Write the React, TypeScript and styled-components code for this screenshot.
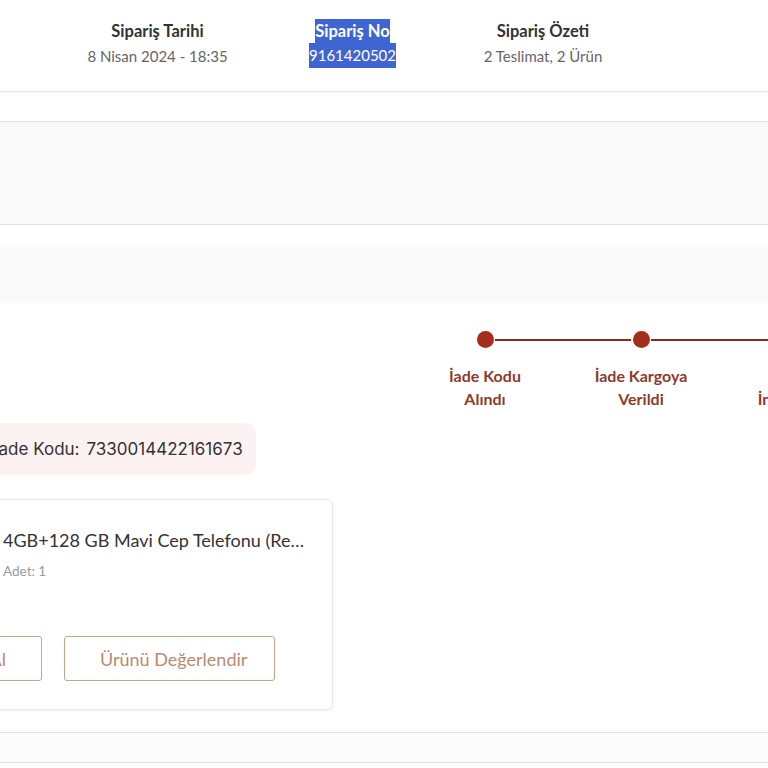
import React from "react";
import styled, { createGlobalStyle } from "styled-components";

const Global = createGlobalStyle`
  html, body { margin: 0; padding: 0; background: #fff; }
  body { overflow: hidden; font-family: "Lato", "Noto Sans", sans-serif; color: #333; }
  * { box-sizing: border-box; }
`;

const Page = styled.div`
  width: 768px;
  height: 768px;
  overflow: hidden;
  display: flex;
  flex-direction: column;
`;

const Header = styled.header`
  height: 92px;
  display: grid;
  grid-template-columns: 195px 195px 186px;
  padding: 19px 0 0 60px;
  border-bottom: 1px solid #e3e3e3;
  box-shadow: 0 1px 2px rgba(0, 0, 0, 0.04);
`;

const Col = styled.div<{ $tight?: boolean }>`
  display: flex;
  flex-direction: column;
  align-items: center;
  gap: ${(p) => (p.$tight ? "0" : "1px")};
`;

const ColTitle = styled.span<{ $sel?: boolean }>`
  font-size: 16.5px;
  font-weight: 700;
  line-height: 24px;
  color: ${(p) => (p.$sel ? "#fff" : "#333")};
  background: ${(p) => (p.$sel ? "#3f65d2" : "transparent")};
`;

const ColValue = styled.span<{ $sel?: boolean }>`
  font-size: 15px;
  line-height: 25px;
  color: ${(p) => (p.$sel ? "#fff" : "#666")};
  background: ${(p) => (p.$sel ? "#3f65d2" : "transparent")};
`;

const GraySection = styled.section`
  margin-top: 29px;
  height: 104px;
  background: #f9f9f9;
  border-top: 1px solid #e3e3e3;
  border-bottom: 1px solid #e3e3e3;
`;

const Band = styled.div`
  margin-top: 22px;
  height: 56px;
  background: #fafafa;
`;

const Timeline = styled.div`
  display: flex;
  padding-left: 407px;
  margin-top: 28px;
`;

const Step = styled.div<{ $last?: boolean }>`
  position: relative;
  flex: 0 0 156px;
  display: flex;
  flex-direction: column;
  align-items: center;
  &::after {
    content: "";
    display: ${(p) => (p.$last ? "none" : "block")};
    position: absolute;
    top: 8px;
    left: calc(50% + 10px);
    width: 136px;
    height: 2px;
    background: #8a2a1d;
  }
`;

const Dot = styled.span`
  width: 17px;
  height: 17px;
  border-radius: 50%;
  background: #a52d1c;
`;

const StepLabel = styled.span`
  margin-top: 16px;
  font-size: 16px;
  font-weight: 700;
  line-height: 23px;
  color: #8d3b2c;
  text-align: center;
`;

const CodePill = styled.div`
  align-self: flex-start;
  margin: 13px 0 0 -21px;
  height: 52px;
  padding: 0 13px 0 15px;
  display: flex;
  align-items: center;
  gap: 7px;
  background: #fcf2f1;
  border-radius: 10px;
  font-family: "Inter", "Roboto", sans-serif;
  font-size: 17px;
  color: #333;
`;

const Card = styled.div`
  align-self: flex-start;
  margin: 24px 0 0 -162px;
  width: 495px;
  height: 211px;
  border: 1px solid #e6e6e6;
  border-radius: 6px;
  box-shadow: 0 1px 3px rgba(0, 0, 0, 0.05);
  padding: 28px 24px 28px 24px;
  display: flex;
  flex-direction: column;
`;

const TopRow = styled.div`
  display: flex;
  gap: 16px;
`;

const Thumb = styled.div`
  flex: 0 0 124px;
  height: 60px;
`;

const Info = styled.div`
  flex: 1;
  min-width: 0;
  display: flex;
  flex-direction: column;
  gap: 9px;
`;

const ProductTitle = styled.span`
  font-size: 18px;
  line-height: 25px;
  color: #333;
  white-space: nowrap;
  overflow: hidden;
  text-overflow: ellipsis;
`;

const Qty = styled.span`
  font-size: 13.5px;
  line-height: 18px;
  color: #9a9a9a;
`;

const Actions = styled.div`
  margin-top: auto;
  display: flex;
  justify-content: flex-end;
  gap: 22px;
  padding-right: 33px;
`;

const Btn = styled.button<{ $w?: number }>`
  height: 45px;
  width: ${(p) => (p.$w ? `${p.$w}px` : "auto")};
  padding: 0 35px;
  background: #fff;
  border: 1px solid #c9a488;
  border-radius: 3px;
  font-family: "Lato", "Noto Sans", sans-serif;
  font-size: 18px;
  color: #b98a6e;
  white-space: nowrap;
`;

const BottomBand = styled.div`
  margin-top: 22px;
  height: 31px;
  background: #fcfcfc;
  border-top: 1px solid #e3e3e3;
  border-bottom: 1px solid #e3e3e3;
`;

const steps = [
  ["İade Kodu", "Alındı"],
  ["İade Kargoya", "Verildi"],
  ["İade", "İnceleniyor"],
];

export default function App() {
  return (
    <Page>
      <Global />
      <Header>
        <Col>
          <ColTitle>Sipariş Tarihi</ColTitle>
          <ColValue>8 Nisan 2024 - 18:35</ColValue>
        </Col>
        <Col $tight>
          <ColTitle $sel>Sipariş No</ColTitle>
          <ColValue $sel>9161420502</ColValue>
        </Col>
        <Col>
          <ColTitle>Sipariş Özeti</ColTitle>
          <ColValue>2 Teslimat, 2 Ürün</ColValue>
        </Col>
      </Header>
      <GraySection />
      <Band />
      <Timeline>
        {steps.map((s, i) => (
          <Step key={i} $last={i === steps.length - 1}>
            <Dot />
            <StepLabel>
              {s[0]}
              <br />
              {s[1]}
            </StepLabel>
          </Step>
        ))}
      </Timeline>
      <CodePill>
        <span>İade Kodu:</span>
        <span>7330014422161673</span>
      </CodePill>
      <Card>
        <TopRow>
          <Thumb />
          <Info>
            <ProductTitle>4GB+128 GB Mavi Cep Telefonu (Realme Türkiye Garantili)</ProductTitle>
            <Qty>Adet: 1</Qty>
          </Info>
        </TopRow>
        <Actions>
          <Btn>Tekrar Satın Al</Btn>
          <Btn $w={211}>Ürünü Değerlendir</Btn>
        </Actions>
      </Card>
      <BottomBand />
    </Page>
  );
}
